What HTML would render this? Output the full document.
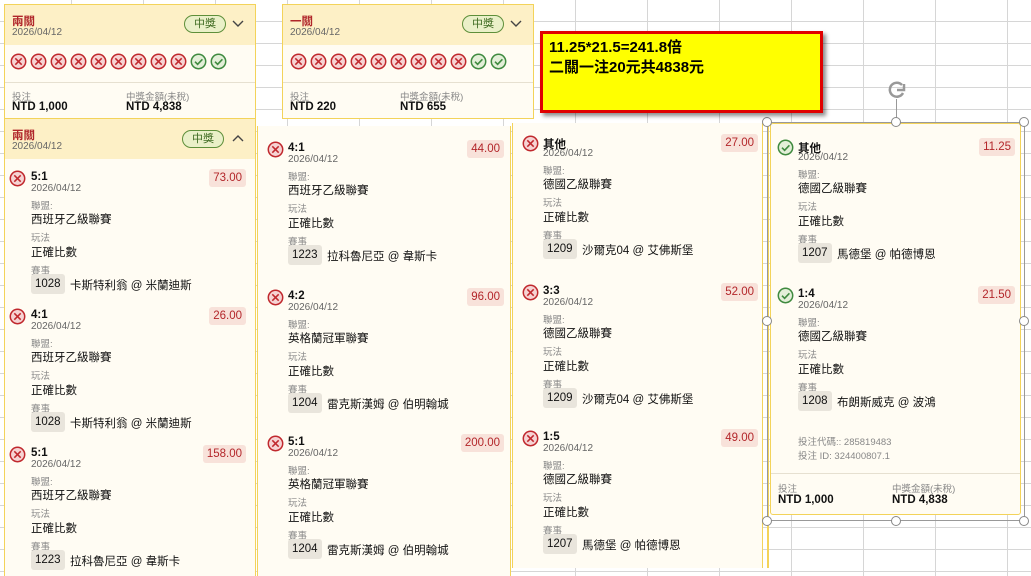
<!DOCTYPE html>
<html style="width:1031px;height:576px;overflow:hidden"><head><meta charset="utf-8"><style>
*{margin:0;padding:0;box-sizing:border-box}
body{width:1031px;height:576px;overflow:hidden;position:relative;font-family:"Liberation Sans","Noto Sans CJK TC",sans-serif;color:#111;
background-color:#fff;
background-image:linear-gradient(to right,#d6d6d6 1px,transparent 1px),linear-gradient(to bottom,#d6d6d6 1px,transparent 1px);
background-size:72px 22px;background-position:-1px -1px;}
.a{position:absolute;white-space:nowrap}
.box{position:absolute;background:#fffcf3;border:1px solid #f3d35a}
.hdr{position:absolute;left:0;right:0;top:0;height:40px;background:#fdf0c6}
.ttl{color:#b0262a;font-weight:bold;font-size:11.5px}
.dt{color:#666;font-size:10px}
.lbl{color:#888;font-size:9.5px}
.v{font-size:11.5px}
.pill{position:absolute;border:1px solid #5e8f3a;background:#eaf0c8;color:#3f6b22;border-radius:9px;font-size:11px;text-align:center;line-height:16px;width:42px;height:18px}
.price{position:absolute;background:#f8e2da;color:#b3262a;font-size:11.5px;border-radius:3px;height:18px;line-height:18px;padding:0 4px}
.mb{position:absolute;background:#e9e5dc;border-radius:3px;height:20px;line-height:20px;padding:0 4px;font-size:11.5px}
.bold{font-weight:bold;font-size:11.5px}
.h{position:absolute;width:10px;height:10px;border:1.5px solid #888;border-radius:50%;background:#fff}
</style></head><body>
<div class="box" style="left:4px;top:4px;width:252px;height:115px">
<div class="hdr"></div>
<div class="a ttl" style="left:7px;top:8px">兩關</div>
<div class="a dt" style="left:7px;top:22px">2026/04/12</div>
<div class="pill" style="left:179px;top:10px">中獎</div>
<svg class="a" style="left:227px;top:15px" width="12" height="8"><polyline points="1,1 6,6 11,1" fill="none" stroke="#444" stroke-width="1.4"/></svg>
<div style="position:absolute;left:0;right:0;top:77px;border-top:1px solid #e6e0d0"></div>
<div class="a lbl" style="left:7px;top:84px">投注</div>
<div class="a bold" style="left:7px;top:96px">NTD 1,000</div>
<div class="a lbl" style="left:121px;top:84px">中獎金額(未稅)</div>
<div class="a bold" style="left:121px;top:96px">NTD 4,838</div>
</div>
<div class="box" style="left:282px;top:4px;width:252px;height:115px">
<div class="hdr"></div>
<div class="a ttl" style="left:7px;top:8px">一關</div>
<div class="a dt" style="left:7px;top:22px">2026/04/12</div>
<div class="pill" style="left:179px;top:10px">中獎</div>
<svg class="a" style="left:227px;top:15px" width="12" height="8"><polyline points="1,1 6,6 11,1" fill="none" stroke="#444" stroke-width="1.4"/></svg>
<div style="position:absolute;left:0;right:0;top:77px;border-top:1px solid #e6e0d0"></div>
<div class="a lbl" style="left:7px;top:84px">投注</div>
<div class="a bold" style="left:7px;top:96px">NTD 220</div>
<div class="a lbl" style="left:117px;top:84px">中獎金額(未稅)</div>
<div class="a bold" style="left:117px;top:96px">NTD 655</div>
</div>
<div class="box" style="left:4px;top:118px;width:252px;height:460px">
<div class="hdr"></div>
<div class="a ttl" style="left:7px;top:8px">兩關</div>
<div class="a dt" style="left:7px;top:22px">2026/04/12</div>
<div class="pill" style="left:177px;top:11px">中獎</div>
<svg class="a" style="left:227px;top:15px" width="12" height="8"><polyline points="1,7 6,2 11,7" fill="none" stroke="#444" stroke-width="1.4"/></svg>
</div>
<div class="box" style="left:257px;top:126px;width:254px;height:452px;border-top:none;border-bottom:none"></div>
<div class="box" style="left:512px;top:123px;width:251px;height:445px;border-top:none;border-bottom:none"></div>
<div class="a" style="left:767px;top:122px;width:1.5px;height:446px;background:#f3d35a"></div>
<div class="box" style="left:770px;top:123px;width:251px;height:392px;border:1.5px solid #f3d35a;border-radius:3px"></div>
<div style="position:absolute;left:771px;top:473px;width:249px;border-top:1px solid #e6e0d0"></div>
<div class="a lbl" style="left:798px;top:434px">投注代碼:: 285819483</div>
<div class="a lbl" style="left:798px;top:448px">投注 ID: 324400807.1</div>
<div class="a lbl" style="left:778px;top:481px">投注</div>
<div class="a bold" style="left:778px;top:494px">NTD 1,000</div>
<div class="a lbl" style="left:892px;top:481px">中獎金額(未稅)</div>
<div class="a bold" style="left:892px;top:494px">NTD 4,838</div>
<div class="a" style="left:767px;top:122px;width:258px;height:399px;border:1px solid #999"></div>
<div class="a" style="left:896px;top:99px;width:1px;height:23px;background:#999"></div>
<svg class="a" style="left:885px;top:79px" width="24" height="22" viewBox="0 0 24 22"><path d="M17 6 A7 7 0 1 0 18 14" fill="none" stroke="#999" stroke-width="2.5"/><path d="M12 11 l7 0 l0 -6" fill="none" stroke="#999" stroke-width="2.5"/></svg>
<div class="h" style="left:762px;top:117px"></div><div class="h" style="left:891px;top:117px"></div><div class="h" style="left:1019px;top:117px"></div>
<div class="h" style="left:762px;top:316px"></div><div class="h" style="left:1019px;top:316px"></div>
<div class="h" style="left:762px;top:516px"></div><div class="h" style="left:891px;top:516px"></div><div class="h" style="left:1019px;top:516px"></div>
<div class="a" style="left:540px;top:31px;width:283px;height:82px;background:#ffff00;border:3px solid #e00000;box-shadow:3px 3px 4px rgba(0,0,0,.45);padding:4px 6px;font-weight:bold;font-size:15px;line-height:20px;color:#000">11.25*21.5=241.8倍<br>二關一注20元共4838元</div>
<div id="g"></div>
<script>
function ic(x,y,ok,r){r=r||7.5;return '<svg class="a" style="left:'+(x-r-1)+'px;top:'+(y-r-1)+'px" width="'+(2*r+2)+'" height="'+(2*r+2)+'"><circle cx="'+(r+1)+'" cy="'+(r+1)+'" r="'+(r-0.3)+'" fill="'+(ok?'#e3efd8':'#f6d3d3')+'" stroke="'+(ok?'#3f8a3f':'#c0282d')+'" stroke-width="1.5"/>'+
(ok?'<path d="M'+(r-2.5)+' '+(r+1.2)+' l2.6 2.6 l4.8 -5" fill="none" stroke="#3f8a3f" stroke-width="1.6"/>':'<path d="M'+(r-2.2)+' '+(r-2.2)+' l6.4 6.4 M'+(r+4.2)+' '+(r-2.2)+' l-6.4 6.4" stroke="#c0282d" stroke-width="1.5"/>')+'</svg>';}
var h='';
[[18,4],[298,4]].forEach(function(c){for(var i=0;i<11;i++)h+=ic(c[0]+i*20,61,i>8);});
function item(ix,tx,rx,T,ok,t,p,lg,no,m){
h+=ic(ix,T,ok);
h+='<div class="a bold" style="left:'+tx+'px;top:'+(T-7)+'px">'+t+'</div>';
h+='<div class="a dt" style="left:'+tx+'px;top:'+(T+5)+'px">2026/04/12</div>';
h+='<div class="price" style="right:'+(1031-rx)+'px;top:'+(T-9)+'px">'+p+'</div>';
h+='<div class="a lbl" style="left:'+tx+'px;top:'+(T+20)+'px">聯盟:</div>';
h+='<div class="a v" style="left:'+tx+'px;top:'+(T+33)+'px">'+lg+'</div>';
h+='<div class="a lbl" style="left:'+tx+'px;top:'+(T+52)+'px">玩法</div>';
h+='<div class="a v" style="left:'+tx+'px;top:'+(T+66)+'px">正確比數</div>';
h+='<div class="a lbl" style="left:'+tx+'px;top:'+(T+85)+'px">賽事</div>';
h+='<div class="mb" style="left:'+tx+'px;top:'+(T+96)+'px">'+no+'</div>';
h+='<div class="a v" style="left:'+(tx+39)+'px;top:'+(T+99)+'px">'+m+'</div>';}
item(17,31,246,178,0,'5:1','73.00','西班牙乙級聯賽','1028','卡斯特利翁 @ 米蘭迪斯');
item(17,31,246,316,0,'4:1','26.00','西班牙乙級聯賽','1028','卡斯特利翁 @ 米蘭迪斯');
item(17,31,246,454,0,'5:1','158.00','西班牙乙級聯賽','1223','拉科魯尼亞 @ 韋斯卡');
item(275,288,504,149,0,'4:1','44.00','西班牙乙級聯賽','1223','拉科魯尼亞 @ 韋斯卡');
item(275,288,504,297,0,'4:2','96.00','英格蘭冠軍聯賽','1204','雷克斯漢姆 @ 伯明翰城');
item(275,288,504,443,0,'5:1','200.00','英格蘭冠軍聯賽','1204','雷克斯漢姆 @ 伯明翰城');
item(530,543,758,143,0,'其他','27.00','德國乙級聯賽','1209','沙爾克04 @ 艾佛斯堡');
item(530,543,758,292,0,'3:3','52.00','德國乙級聯賽','1209','沙爾克04 @ 艾佛斯堡');
item(530,543,758,438,0,'1:5','49.00','德國乙級聯賽','1207','馬德堡 @ 帕德博恩');
item(785,798,1015,147,1,'其他','11.25','德國乙級聯賽','1207','馬德堡 @ 帕德博恩');
item(785,798,1015,295,1,'1:4','21.50','德國乙級聯賽','1208','布朗斯威克 @ 波鴻');
document.getElementById('g').innerHTML=h;
</script>
</body></html>
